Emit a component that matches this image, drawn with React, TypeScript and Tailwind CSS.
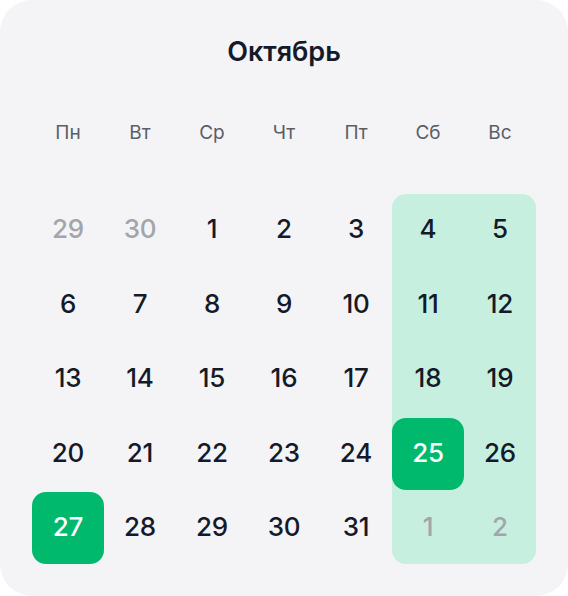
const weekdays = ["Пн", "Вт", "Ср", "Чт", "Пт", "Сб", "Вс"];

type Day = { n: number; muted?: boolean; selected?: boolean };

const weeks: Day[][] = [
  [{ n: 29, muted: true }, { n: 30, muted: true }, { n: 1 }, { n: 2 }, { n: 3 }, { n: 4 }, { n: 5 }],
  [{ n: 6 }, { n: 7 }, { n: 8 }, { n: 9 }, { n: 10 }, { n: 11 }, { n: 12 }],
  [{ n: 13 }, { n: 14 }, { n: 15 }, { n: 16 }, { n: 17 }, { n: 18 }, { n: 19 }],
  [{ n: 20 }, { n: 21 }, { n: 22 }, { n: 23 }, { n: 24 }, { n: 25, selected: true }, { n: 26 }],
  [{ n: 27, selected: true }, { n: 28 }, { n: 29 }, { n: 30 }, { n: 31 }, { n: 1, muted: true }, { n: 2, muted: true }],
];

const DayCell = ({ day }: { day: Day }) => {
  const color = day.selected ? "bg-[#00b96d] text-white" : day.muted ? "text-[#a2a5ab]" : "text-[#141a29]";
  return (
    <div className={`flex h-[72px] w-[72px] items-center justify-center rounded-[14px] pb-[3px] text-[26px] font-medium tracking-[-0.2px] ${color}`}>
      {day.n}
    </div>
  );
};

const Column = ({ col }: { col: number }) => (
  <div className="flex flex-col gap-y-[2.5px]">
    {weeks.map((w, i) => (
      <DayCell key={i} day={w[col]} />
    ))}
  </div>
);

export default function App() {
  return (
    <div className="h-[596px] w-[568px] bg-white" style={{ fontFamily: "Inter, 'Noto Sans', sans-serif" }}>
      <div className="flex h-full flex-col rounded-[32px] bg-[#f4f4f6] px-8">
        <h1 className="pt-[36px] text-center text-[27px] font-semibold leading-8 text-[#141a29]">Октябрь</h1>
        <div className="mt-[53px] grid grid-cols-7">
          {weekdays.map((d) => (
            <div key={d} className="text-center text-[19px] leading-6 text-[#5a5e66]">
              {d}
            </div>
          ))}
        </div>
        <div className="mt-[49px] flex">
          {[0, 1, 2, 3, 4].map((c) => (
            <Column key={c} col={c} />
          ))}
          <div className="flex rounded-[14px] bg-[#c7efe0]">
            <Column col={5} />
            <Column col={6} />
          </div>
        </div>
      </div>
    </div>
  );
}
